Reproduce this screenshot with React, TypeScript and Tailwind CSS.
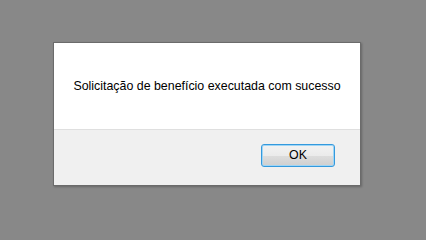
export default function App() {
  return (
    <div
      className="w-full min-h-screen bg-[#888888] pt-[42px] pl-[53px]"
      style={{ fontFamily: '"Liberation Sans", Arial, sans-serif' }}
    >
      <div className="w-[308px] h-[144px] border border-[#6b6b6b] bg-white flex flex-col shadow-[1px_1px_2px_rgba(0,0,0,0.25)]">
        <div className="h-[86px] flex items-center justify-center text-[12.4px] text-black pt-px">
          Solicitação de benefício executada com sucesso
        </div>
        <div className="flex-1 bg-[#f0f0f0] border-t border-[#dfdfdf] flex items-start justify-end pt-[14px] pr-[25px]">
          <button className="w-[74px] h-[23px] rounded-[3px] border border-[#3399dd] shadow-[inset_0_0_0_1px_#9fd5f5] bg-[linear-gradient(to_bottom,#f2f2f2_0%,#ebebeb_50%,#dddddd_51%,#cfcfcf_100%)] text-[12.4px] text-black leading-none">
            OK
          </button>
        </div>
      </div>
    </div>
  );
}
